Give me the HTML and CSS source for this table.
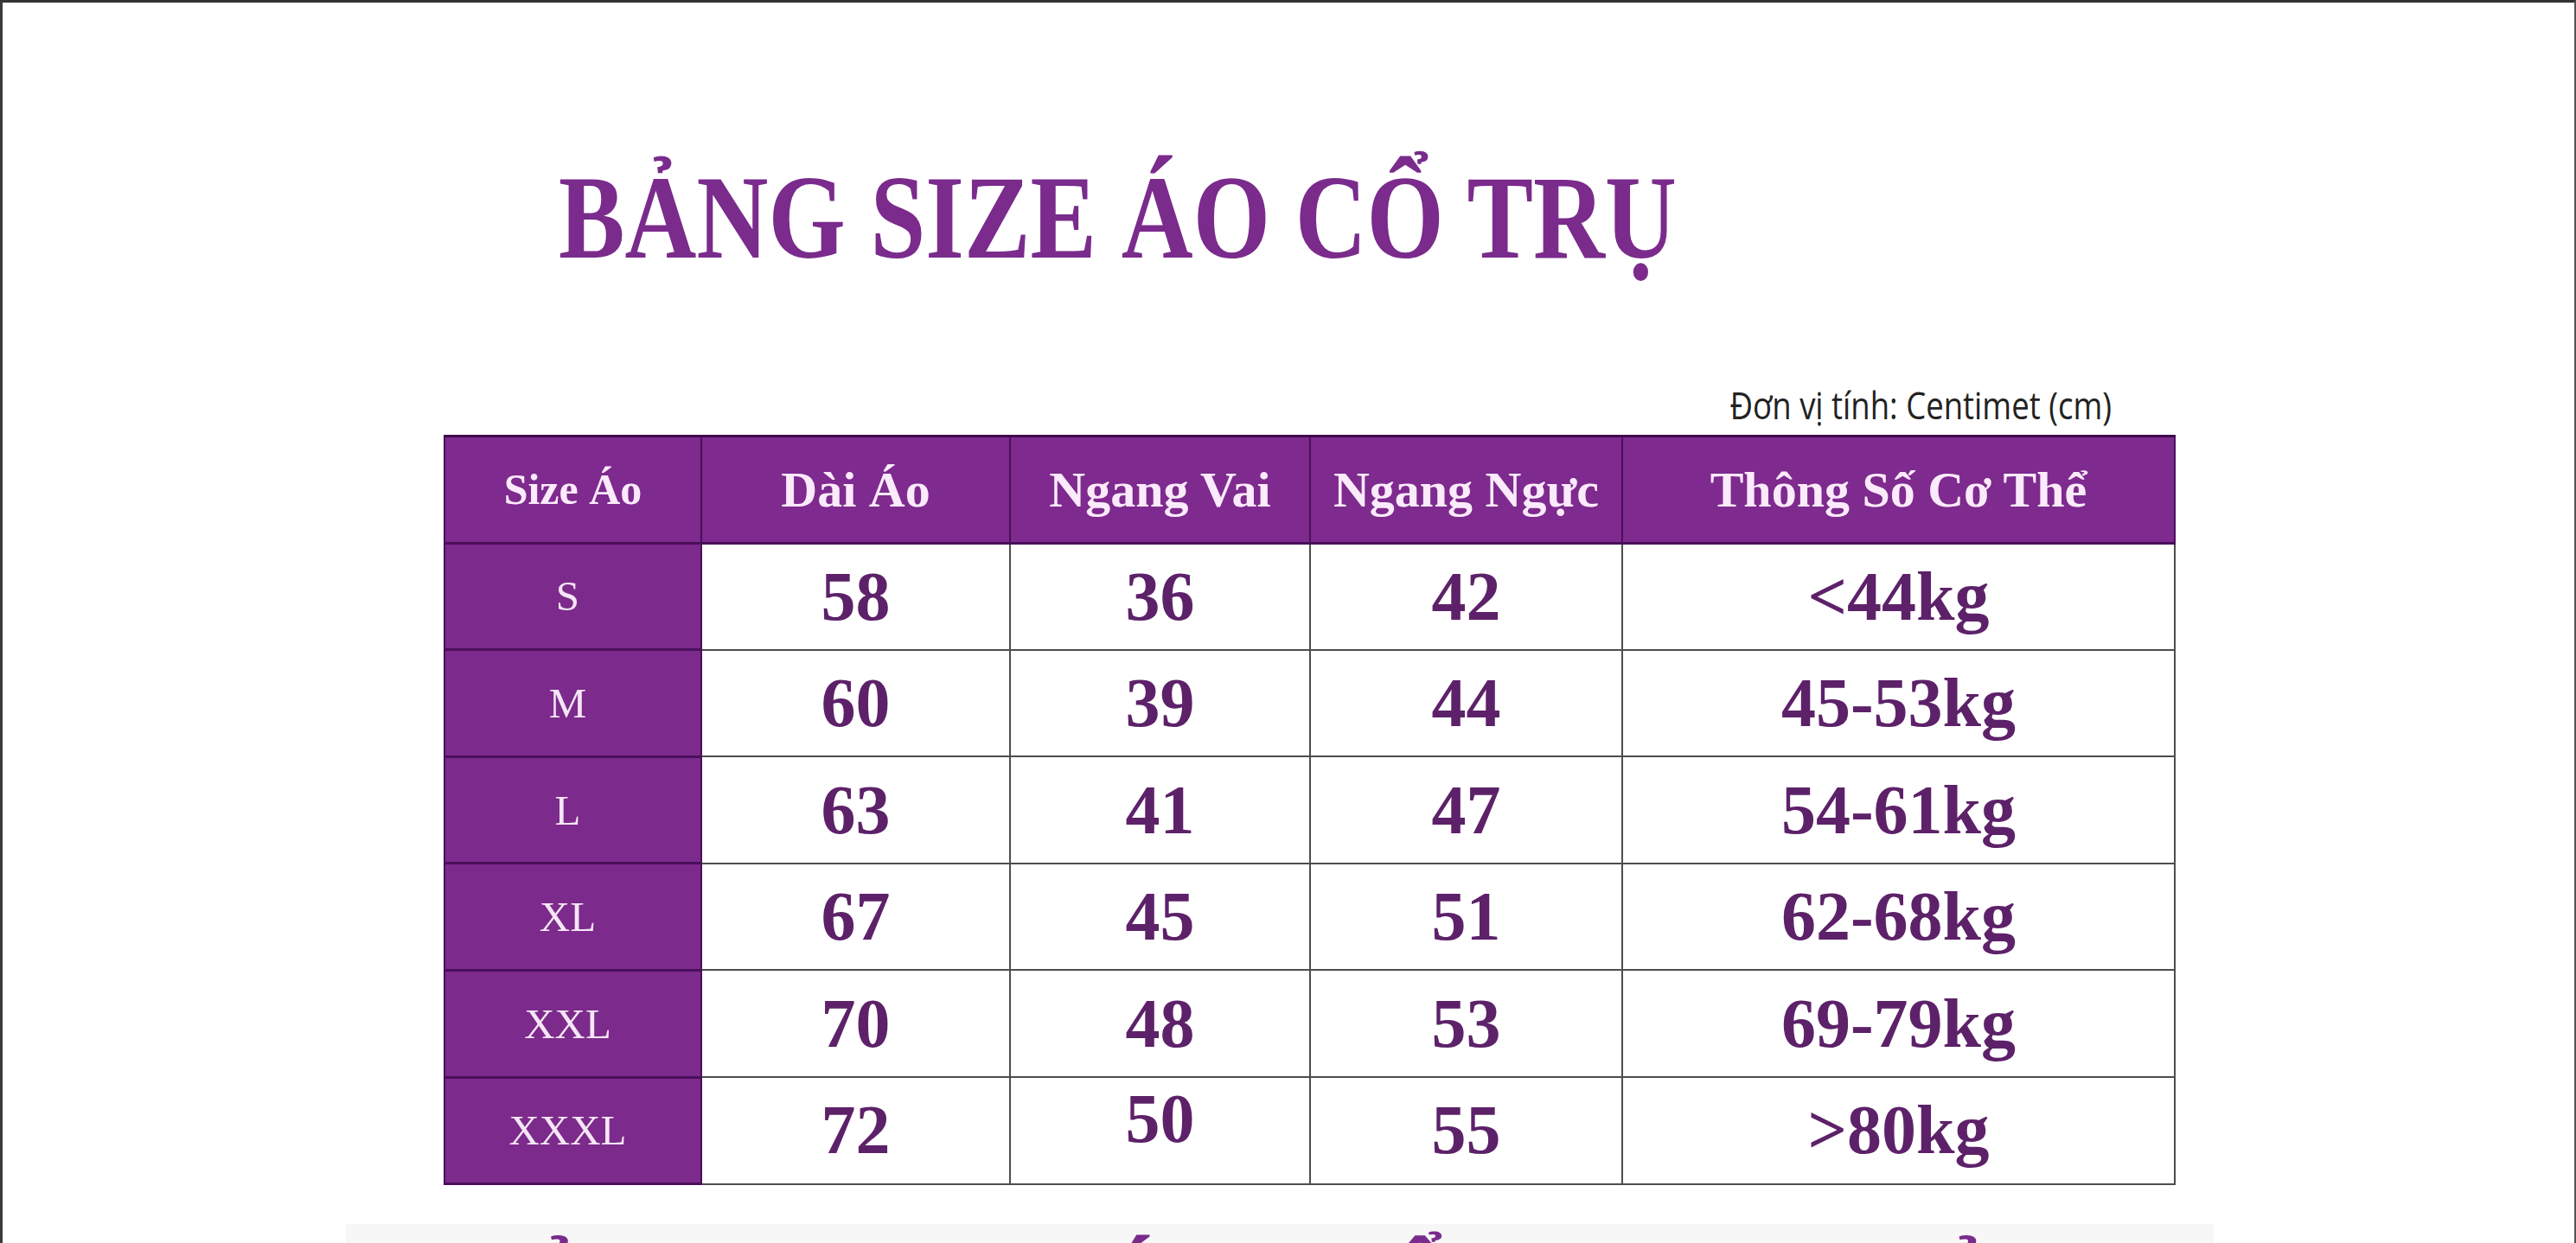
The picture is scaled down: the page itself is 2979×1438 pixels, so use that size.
FILE: index.html
```html
<!DOCTYPE html>
<html lang="vi">
<head>
<meta charset="utf-8">
<title>Bảng size áo cổ trụ</title>
<link rel="stylesheet" href="styles.css">
</head>
<body>
<div class="page">
  <h1 class="title"><span>BẢNG SIZE ÁO CỔ TRỤ</span></h1>
  <div class="sheet">
    <p class="unit"><span>Đơn vị tính: Centimet (cm)</span></p>
    <table class="sizes">
      <colgroup>
        <col class="c1"><col class="c2"><col class="c3"><col class="c4"><col class="c5">
      </colgroup>
      <thead>
        <tr>
          <th class="small">Size Áo</th>
          <th>Dài Áo</th>
          <th>Ngang Vai</th>
          <th>Ngang Ngực</th>
          <th>Thông Số Cơ Thể</th>
        </tr>
      </thead>
      <tbody>
        <tr><td class="size">S</td><td>58</td><td>36</td><td>42</td><td>&lt;44kg</td></tr>
        <tr><td class="size">M</td><td>60</td><td>39</td><td>44</td><td>45-53kg</td></tr>
        <tr><td class="size">L</td><td>63</td><td>41</td><td>47</td><td>54-61kg</td></tr>
        <tr><td class="size">XL</td><td>67</td><td>45</td><td>51</td><td>62-68kg</td></tr>
        <tr><td class="size">XXL</td><td>70</td><td>48</td><td>53</td><td>69-79kg</td></tr>
        <tr><td class="size">XXXL</td><td>72</td><td class="lift">50</td><td>55</td><td>&gt;80kg</td></tr>
      </tbody>
    </table>
  </div>
  <div class="band">
    <span class="w1">BẢNG SIZE</span><span class="w2">ÁO</span><span class="w3">ĐỂ</span><span class="w4">THAM KHẢO</span>
  </div>
</div>
</body>
</html>
```

FILE: styles.css
```css
html, body {
  margin: 0;
  padding: 0;
  background: #ffffff;
}

.page {
  box-sizing: border-box;
  width: 2979px;
  height: 1438px;
  overflow: hidden;
  background: #ffffff;
  border-top: 3px solid #333333;
  border-left: 3px solid #3a3a3a;
  border-right: 2px solid #555555;
}

.title {
  margin: 0;
  padding: 181px 0 0 643px;
  font-family: "Liberation Serif", "Times New Roman", serif;
  font-weight: bold;
  font-size: 137px;
  line-height: 1;
  color: #7a2b8c;
  white-space: nowrap;
}

.title span {
  display: inline-block;
  transform: scaleX(0.838);
  transform-origin: left center;
}

.sheet {
  margin-left: 510px;
  width: 2001px;
}

.unit {
  margin: 125px 72px 13px 0;
  text-align: right;
  font-family: "Open Sans", "Noto Sans", sans-serif;
  font-size: 44px;
  line-height: 1;
  color: #222222;
  white-space: nowrap;
}

.unit span {
  display: inline-block;
  transform: scaleX(0.83);
  transform-origin: right center;
}

.sizes {
  border-collapse: collapse;
  table-layout: fixed;
  width: 2001px;
  font-family: "Liberation Serif", "Times New Roman", serif;
}

.c1 { width: 297px; }
.c2 { width: 357px; }
.c3 { width: 347px; }
.c4 { width: 361px; }
.c5 { width: 639px; }

.sizes tr {
  height: 123.6px;
}

.sizes th,
.sizes td {
  padding: 0;
  text-align: center;
  vertical-align: middle;
  white-space: nowrap;
}

.sizes th {
  background: #7e2a8e;
  color: #fbeafb;
  font-weight: bold;
  font-size: 58px;
  border: 2px solid #4a0f5a;
  border-top: 3px solid #3f0a4f;
  border-bottom: 3px solid #4a0f5a;
}

.sizes th.small {
  font-size: 50px;
}

.sizes td {
  color: #5d2169;
  font-weight: bold;
  font-size: 80px;
  border: 2px solid #4d4d4d;
  background: #ffffff;
}

.sizes td.size {
  background: #7c2a8b;
  color: #f5e6f5;
  font-weight: normal;
  font-size: 49px;
  padding-right: 12px;
  border: 2px solid #4a0f5a;
  border-bottom: 3px solid #4a0f5a;
}

.sizes td.lift {
  padding-bottom: 26px;
}

.band {
  display: flex;
  margin: 45px 0 0 397px;
  width: 2160px;
  height: 120px;
  padding-top: 15px;
  background: #f7f7f7;
  font-family: "Liberation Serif", "Times New Roman", serif;
  font-weight: bold;
  font-size: 110px;
  line-height: 1;
  color: #7a2b8c;
  white-space: nowrap;
}

.w1 { margin-left: 132px; }
.w2 { margin-left: 145px; }
.w3 { margin-left: 88px; }
.w4 { margin-left: 14px; }
```
